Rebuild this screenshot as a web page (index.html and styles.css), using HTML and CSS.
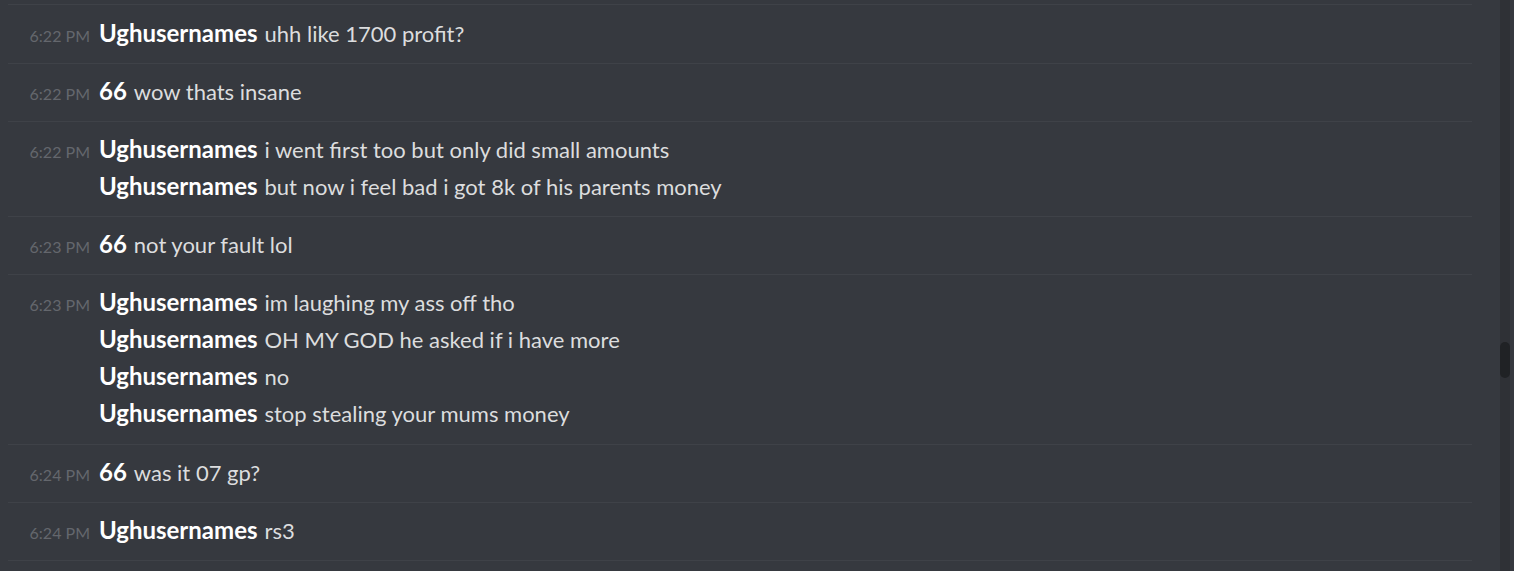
FILE: index.html
```html
<!DOCTYPE html>
<html lang="en">
<head>
    <meta charset="UTF-8">
    <title>Chat</title>
    <link rel="stylesheet" href="styles.css">
</head>
<body>

    <div class="page">
        <!-- Messages -->
        <div class="chat">
            <div class="group">
                <div class="line"><span class="time">6:22 PM</span><span class="user">Ughusernames</span><span class="text">uhh like 1700 profit?</span></div>
            </div>
            <div class="group">
                <div class="line"><span class="time">6:22 PM</span><span class="user">66</span><span class="text">wow thats insane</span></div>
            </div>
            <div class="group">
                <div class="line"><span class="time">6:22 PM</span><span class="user">Ughusernames</span><span class="text">i went first too but only did small amounts</span></div>
                <div class="line"><span class="time"></span><span class="user">Ughusernames</span><span class="text">but now i feel bad i got 8k of his parents money</span></div>
            </div>
            <div class="group">
                <div class="line"><span class="time">6:23 PM</span><span class="user">66</span><span class="text">not your fault lol</span></div>
            </div>
            <div class="group tall">
                <div class="line"><span class="time">6:23 PM</span><span class="user">Ughusernames</span><span class="text">im laughing my ass off tho</span></div>
                <div class="line"><span class="time"></span><span class="user">Ughusernames</span><span class="text">OH MY GOD he asked if i have more</span></div>
                <div class="line"><span class="time"></span><span class="user">Ughusernames</span><span class="text">no</span></div>
                <div class="line"><span class="time"></span><span class="user">Ughusernames</span><span class="text">stop stealing your mums money</span></div>
            </div>
            <div class="group">
                <div class="line"><span class="time">6:24 PM</span><span class="user">66</span><span class="text">was it 07 gp?</span></div>
            </div>
            <div class="group">
                <div class="line"><span class="time">6:24 PM</span><span class="user">Ughusernames</span><span class="text">rs3</span></div>
            </div>
        </div>

        <!-- Scrollbar -->
        <div class="scrollbar">
            <div class="thumb"></div>
        </div>
    </div>

</body>
</html>
```

FILE: styles.css
```css
/* General */
body {
    margin: 0;
    padding: 0;
    background-color: #36393f;
    font-family: Lato, "Open Sans", sans-serif;
    overflow: hidden;
}

.page {
    display: flex;
    height: 571px;
}

/* Messages */
.chat {
    flex: 1;
    padding: 4px 28px 0 8px;
}

.group {
    border-top: 1px solid #3f4248;
    padding: 8px 0 12px;
}

.group:first-child {
    padding-top: 9px;
}

.group.tall {
    padding-bottom: 13px;
}

.group:last-child {
    border-bottom: 1px solid #3f4248;
}

.line {
    display: flex;
    align-items: baseline;
    height: 37px;
    line-height: 37px;
}

.time {
    width: 82px;
    text-align: right;
    font-size: 16px;
    color: #64676d;
    margin-right: 9px;
    white-space: nowrap;
}

.user {
    font-size: 24px;
    font-weight: 700;
    color: #ffffff;
    margin-right: 7px;
}

.text {
    font-size: 22px;
    color: #dcddde;
}

/* Scrollbar */
.scrollbar {
    width: 10px;
    background: #2f3136;
    margin-right: 4px;
    padding-top: 342px;
    box-sizing: border-box;
}

.thumb {
    height: 36px;
    background: #202225;
    border-radius: 5px;
}
```
